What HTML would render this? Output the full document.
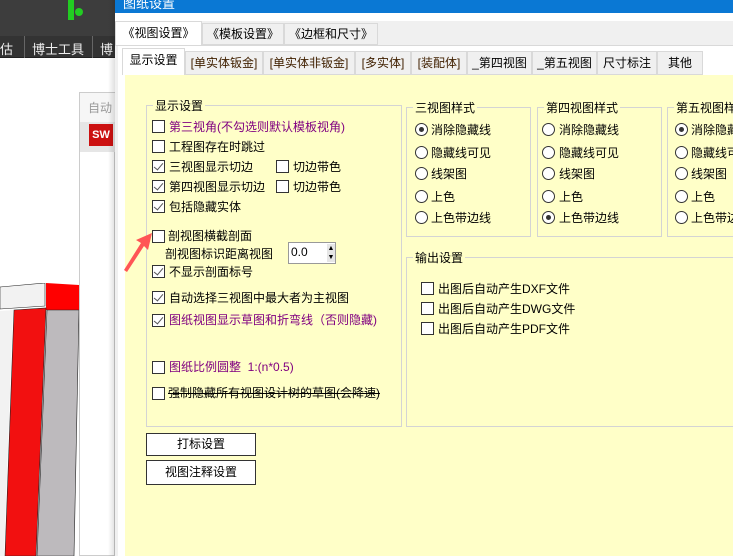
<!DOCTYPE html>
<html><head><meta charset="utf-8"><style>
*{margin:0;padding:0;box-sizing:border-box}
body{width:733px;height:556px;overflow:hidden;position:relative;background:#fff;font-family:"Liberation Sans","Noto Sans CJK SC",sans-serif;font-size:12px;color:#000}
.a{position:absolute;white-space:nowrap}
.cb{position:absolute;width:13px;height:13px;border:1px solid #333;background:#fff}
.cb.on::after{content:"";position:absolute;left:3px;top:0px;width:4px;height:8px;border:solid #555;border-width:0 1.5px 1.5px 0;transform:rotate(40deg)}
.rd{position:absolute;width:13px;height:13px;border:1px solid #333;border-radius:50%;background:#fff}
.rd.on::after{content:"";position:absolute;left:3px;top:3px;width:5px;height:5px;border-radius:50%;background:#333}
.grp{position:absolute;border:1px solid #d4d4d4}
.lg{position:absolute;background:#ffffc8;padding:0 2px;top:-9px;left:6px;white-space:nowrap}
.tab{position:absolute;height:24px;border:1px solid #d9d9d9;background:#f0f0f0;text-align:center;line-height:22px}
.p{color:#800080}
.btn{position:absolute;border:1px solid #333;background:#fff;text-align:center;line-height:20px}
</style></head><body>
<div class="a" style="left:0;top:0;width:115px;height:36px;background:#3d3d3d"></div>
<div class="a" style="left:0;top:36px;width:115px;height:22px;background:#333;border-bottom:1px solid #222"></div>
<div class="a" style="left:0;top:39px;color:#eee;font-size:13px">估</div>
<div class="a" style="left:24px;top:36px;width:1px;height:22px;background:#666"></div>
<div class="a" style="left:32px;top:39px;color:#eee;font-size:13px">博士工具</div>
<div class="a" style="left:92px;top:36px;width:1px;height:22px;background:#666"></div>
<div class="a" style="left:100px;top:39px;color:#eee;font-size:13px">博</div>
<div class="a" style="left:68px;top:0;width:6px;height:20px;background:#2c2;"></div>
<div class="a" style="left:75px;top:8px;width:8px;height:8px;border-radius:50%;background:#2c2"></div>
<div class="a" style="left:79px;top:92px;width:36px;height:464px;background:#fff;border:1px solid #ccc"></div>
<div class="a" style="left:80px;top:93px;width:35px;height:29px;background:#f6f6f6;color:#999;padding:6px 0 0 8px">自动</div>
<div class="a" style="left:80px;top:122px;width:35px;height:30px;background:#e6e6e6"></div>
<div class="a" style="left:89px;top:124px;width:24px;height:22px;background:#c11;color:#fff;font-weight:bold;font-size:11px;line-height:22px;text-align:center">SW</div>
<svg class="a" style="left:0;top:283px" width="79" height="273">
<polygon points="0,4 45,0 45,23 0,26" fill="#f2f2f2" stroke="#222" stroke-width="0.6"/>
<polygon points="46,0 79,2 79,27 46,27" fill="#f00"/>
<polygon points="14,27 46,25 36,273 5,273" fill="#f21010" stroke="#222" stroke-width="0.6"/>
<polygon points="47,27 79,27 74,273 37,273" fill="#bdbabd" stroke="#222" stroke-width="0.6"/>
<polygon points="0,28 13,27 4,273 0,273" fill="#f2f2f2"/>
</svg>
<div class="a" style="left:108px;top:0;width:7px;height:556px;background:linear-gradient(90deg,rgba(0,0,0,0),rgba(0,0,0,.12))"></div>
<div class="a" style="left:115px;top:0;width:618px;height:556px;background:#f0f0f0"></div>
<div class="a" style="left:115px;top:0;width:618px;height:13px;background:#0a78d4;color:#fff;padding-left:8px;line-height:8px;font-size:13px;overflow:hidden">图纸设置</div>
<div class="a" style="left:115px;top:13px;width:618px;height:8px;background:#fff"></div>
<div class="tab" style="left:115px;top:21px;width:87px;background:#fff;border-bottom:none;height:25px">《视图设置》</div>
<div class="tab" style="left:202px;top:23px;width:82px;height:22px;line-height:20px">《模板设置》</div>
<div class="tab" style="left:284px;top:23px;width:94px;height:22px;line-height:20px">《边框和尺寸》</div>
<div class="a" style="left:115px;top:45px;width:618px;height:1px;background:#d9d9d9"></div>
<div class="a" style="left:118px;top:46px;width:615px;height:510px;background:#fff"></div>
<div class="tab" style="left:122px;top:48px;width:63px;height:27px;background:#fff;border-bottom:none">显示设置</div>
<div class="tab" style="left:185px;top:51px;width:78px;color:#402000">[单实体钣金]</div>
<div class="tab" style="left:263px;top:51px;width:92px;color:#402000">[单实体非钣金]</div>
<div class="tab" style="left:355px;top:51px;width:56px;color:#402000">[多实体]</div>
<div class="tab" style="left:411px;top:51px;width:56px;color:#402000">[装配体]</div>
<div class="tab" style="left:467px;top:51px;width:65px">_第四视图</div>
<div class="tab" style="left:532px;top:51px;width:65px">_第五视图</div>
<div class="tab" style="left:597px;top:51px;width:60px">尺寸标注</div>
<div class="tab" style="left:657px;top:51px;width:46px">其他</div>
<div class="a" style="left:125px;top:75px;width:608px;height:481px;background:#ffffc8"></div>

<div class="grp" style="left:146px;top:105px;width:256px;height:322px"><span class="lg">显示设置</span></div>
<div class="cb" style="left:152px;top:120px"></div><div class="a p" style="left:169px;top:118px">第三视角(不勾选则默认模板视角)</div>
<div class="cb" style="left:152px;top:140px"></div><div class="a" style="left:169px;top:138px">工程图存在时跳过</div>
<div class="cb on" style="left:152px;top:160px"></div><div class="a" style="left:169px;top:158px">三视图显示切边</div>
<div class="cb" style="left:276px;top:160px"></div><div class="a" style="left:293px;top:158px">切边带色</div>
<div class="cb on" style="left:152px;top:180px"></div><div class="a" style="left:169px;top:178px">第四视图显示切边</div>
<div class="cb" style="left:276px;top:180px"></div><div class="a" style="left:293px;top:178px">切边带色</div>
<div class="cb on" style="left:152px;top:200px"></div><div class="a" style="left:169px;top:198px">包括隐藏实体</div>
<div class="cb" style="left:152px;top:230px"></div><div class="a" style="left:168px;top:227px">剖视图横截剖面</div>
<div class="a" style="left:165px;top:245px">剖视图标识距离视图</div>
<div class="a" style="left:288px;top:242px;width:48px;height:22px;border:1px solid #999;background:#fff;padding:2px 0 0 2px">0.0</div>
<div class="a" style="left:327px;top:244px;width:8px;height:18px;background:#e6e6e6;font-size:7px;line-height:9px;text-align:center">▲<br>▼</div>
<div class="cb on" style="left:152px;top:265px"></div><div class="a" style="left:169px;top:263px">不显示剖面标号</div>
<div class="cb on" style="left:152px;top:291px"></div><div class="a" style="left:169px;top:289px">自动选择三视图中最大者为主视图</div>
<div class="cb on" style="left:152px;top:314px"></div><div class="a p" style="left:169px;top:311px">图纸视图显示草图和折弯线（否则隐藏)</div>
<div class="cb" style="left:152px;top:361px"></div><div class="a p" style="left:169px;top:358px">图纸比例圆整&nbsp;&nbsp;1:(n*0.5)</div>
<div class="cb" style="left:152px;top:387px"></div><div class="a" style="left:168px;top:384px;text-decoration:line-through">强制隐藏所有视图设计树的草图(会降速)</div>
<svg class="a" style="left:122px;top:230px" width="35" height="45"><polygon points="30,3 26,20 22,16 5,42 2,40 19,13 14,10" fill="#f55"/></svg>

<div class="btn" style="left:146px;top:433px;width:110px;height:23px">打标设置</div>
<div class="btn" style="left:146px;top:460px;width:110px;height:25px;line-height:23px">视图注释设置</div>

<div class="grp" style="left:406px;top:107px;width:125px;height:130px"><span class="lg">三视图样式</span></div>
<div class="grp" style="left:537px;top:107px;width:125px;height:130px"><span class="lg">第四视图样式</span></div>
<div class="grp" style="left:667px;top:107px;width:80px;height:130px"><span class="lg">第五视图样式</span></div>

<div class="rd on" style="left:415px;top:123px"></div><div class="a" style="left:431px;top:121px">消除隐藏线</div>
<div class="rd" style="left:415px;top:146px"></div><div class="a" style="left:431px;top:144px">隐藏线可见</div>
<div class="rd" style="left:415px;top:167px"></div><div class="a" style="left:431px;top:165px">线架图</div>
<div class="rd" style="left:415px;top:190px"></div><div class="a" style="left:431px;top:188px">上色</div>
<div class="rd" style="left:415px;top:211px"></div><div class="a" style="left:431px;top:209px">上色带边线</div>

<div class="rd" style="left:542px;top:123px"></div><div class="a" style="left:559px;top:121px">消除隐藏线</div>
<div class="rd" style="left:542px;top:146px"></div><div class="a" style="left:559px;top:144px">隐藏线可见</div>
<div class="rd" style="left:542px;top:167px"></div><div class="a" style="left:559px;top:165px">线架图</div>
<div class="rd" style="left:542px;top:190px"></div><div class="a" style="left:559px;top:188px">上色</div>
<div class="rd on" style="left:542px;top:211px"></div><div class="a" style="left:559px;top:209px">上色带边线</div>

<div class="rd on" style="left:675px;top:123px"></div><div class="a" style="left:691px;top:121px">消除隐藏线</div>
<div class="rd" style="left:675px;top:146px"></div><div class="a" style="left:691px;top:144px">隐藏线可见</div>
<div class="rd" style="left:675px;top:167px"></div><div class="a" style="left:691px;top:165px">线架图</div>
<div class="rd" style="left:675px;top:190px"></div><div class="a" style="left:691px;top:188px">上色</div>
<div class="rd" style="left:675px;top:211px"></div><div class="a" style="left:691px;top:209px">上色带边线</div>

<div class="grp" style="left:406px;top:257px;width:340px;height:170px"><span class="lg">输出设置</span></div>
<div class="cb" style="left:421px;top:282px"></div><div class="a" style="left:438px;top:280px">出图后自动产生DXF文件</div>
<div class="cb" style="left:421px;top:302px"></div><div class="a" style="left:438px;top:300px">出图后自动产生DWG文件</div>
<div class="cb" style="left:421px;top:322px"></div><div class="a" style="left:438px;top:320px">出图后自动产生PDF文件</div>
</body></html>
